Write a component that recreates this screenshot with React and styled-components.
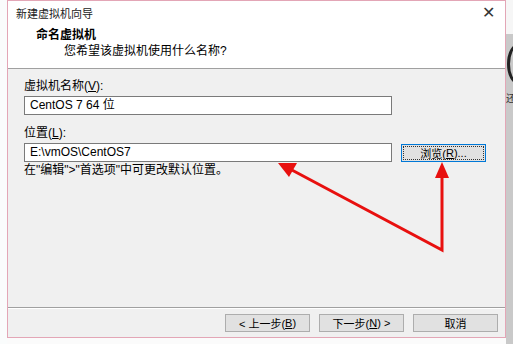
import React from "react";
import styled, { createGlobalStyle } from "styled-components";

const GlobalStyle = createGlobalStyle`
  html, body {
    margin: 0;
    padding: 0;
    background: #fbfbfb;
  }
  body {
    font-family: "Liberation Sans", "Noto Sans CJK SC", sans-serif;
    font-size: 12px;
    color: #000;
  }
`;

const Page = styled.div`
  position: relative;
  width: 513px;
  height: 344px;
  display: flex;
  overflow: hidden;
`;

const Gutter = styled.div`
  width: 7px;
  flex-shrink: 0;
  background: #fafcfc;
`;

const RightStrip = styled.div`
  flex: 1;
  display: flex;
  flex-direction: column;
  background: #fafafa;
  overflow: hidden;
`;

const StripTop = styled.div`
  height: 34px;
  background: #f6f6f6;
`;

const StripBody = styled.div`
  flex: 1;
  background: #c9c9c9;
  display: flex;
  flex-direction: column;
  gap: 6px;
  padding-top: 10px;
  overflow: hidden;
  font-size: 10px;
  color: #333;
`;

const StripArc = styled.div`
  width: 16px;
  height: 34px;
  margin-left: 1px;
  border: 3px solid #222;
  border-radius: 50%;
`;

const Window = styled.div`
  width: 497px;
  height: 336px;
  flex-shrink: 0;
  border: 1px solid #e3a6b6;
  background: #f0f0f0;
  display: flex;
  flex-direction: column;
`;

const TitleBar = styled.div`
  height: 24px;
  display: flex;
  align-items: center;
  justify-content: space-between;
  padding: 0 10px 0 8px;
  background: #fff;
  font-size: 11px;
  color: #222;
`;

const Close = styled.span`
  font-size: 16px;
  font-weight: 300;
  color: #333;
  line-height: 1;
`;

const Header = styled.div`
  height: 43px;
  background: #fff;
  border-bottom: 1px solid #a0a0a0;
  display: flex;
  flex-direction: column;
  padding: 2px 0 0 28px;
  box-sizing: border-box;
  height: 44px;
`;

const HeaderTitle = styled.div`
  font-weight: bold;
  height: 16px;
  line-height: 16px;
`;

const HeaderSub = styled.div`
  margin-left: 28px;
  height: 16px;
  line-height: 16px;
`;

const Body = styled.div`
  flex: 1;
  display: flex;
  flex-direction: column;
  padding: 9px 0 0 16px;
`;

const Label = styled.div`
  height: 16px;
  line-height: 16px;
  margin-bottom: 2px;
  margin-top: ${({ top }) => top || 0}px;
`;

const Row = styled.div`
  display: flex;
  align-items: center;
  gap: 9px;
`;

const Input = styled.div`
  width: 361px;
  height: 17px;
  border: 1px solid #7a7a7a;
  background: #fff;
  line-height: 17px;
  padding-left: 5px;
  box-sizing: content-box;
`;

const Hint = styled.div`
  height: 16px;
  line-height: 16px;
`;

const Spacer = styled.div`
  flex: 1;
`;

const Footer = styled.div`
  border-top: 1px solid #a0a0a0;
  box-shadow: inset 0 1px 0 #fff;
  height: 23px;
  display: flex;
  justify-content: flex-end;
  gap: 9px;
  padding: 6px 7px 0 0;
`;

const Button = styled.div`
  width: 83px;
  height: 16px;
  border: 1px solid ${({ focused }) => (focused ? "#0078d7" : "#adadad")};
  background: #e1e1e1;
  display: flex;
  align-items: center;
  justify-content: center;
  font-size: 11px;
  position: relative;
  box-sizing: content-box;
  &::after {
    content: "";
    display: ${({ focused }) => (focused ? "block" : "none")};
    position: absolute;
    inset: 1px;
    border: 1px dotted #333;
  }
`;

const Overlay = styled.svg`
  position: absolute;
  left: 0;
  top: 0;
  pointer-events: none;
`;

export default function App() {
  return (
    <>
      <GlobalStyle />
      <Page>
        <Gutter />
        <Window>
          <TitleBar>
            <span>新建虚拟机向导</span>
            <Close>✕</Close>
          </TitleBar>
          <Header>
            <HeaderTitle>命名虚拟机</HeaderTitle>
            <HeaderSub>您希望该虚拟机使用什么名称?</HeaderSub>
          </Header>
          <Body>
            <Label>
              虚拟机名称(<u>V</u>):
            </Label>
            <Input>CentOS 7 64 位</Input>
            <Label top={10}>
              位置(<u>L</u>):
            </Label>
            <Row>
              <Input>E:\vmOS\CentOS7</Input>
              <Button focused>
                浏览(<u>R</u>)...
              </Button>
            </Row>
            <Hint>在"编辑"&gt;"首选项"中可更改默认位置。</Hint>
            <Spacer />
          </Body>
          <Footer>
            <Button>
              &lt; 上一步(<u>B</u>)
            </Button>
            <Button>
              下一步(<u>N</u>) &gt;
            </Button>
            <Button>取消</Button>
          </Footer>
        </Window>
        <RightStrip>
          <StripTop />
          <StripBody>
            <StripArc />
            <span>还</span>
          </StripBody>
        </RightStrip>
        <Overlay width="513" height="344" viewBox="0 0 513 344">
          <g stroke="#e8100f" strokeWidth="3" fill="none" strokeLinecap="round">
            <polyline points="442,172 442,250 290,169" />
          </g>
          <polygon points="278,163 297,163 289,177" fill="#e8100f" />
          <polygon points="442,162 435,178 449,178" fill="#e8100f" />
        </Overlay>
      </Page>
    </>
  );
}
